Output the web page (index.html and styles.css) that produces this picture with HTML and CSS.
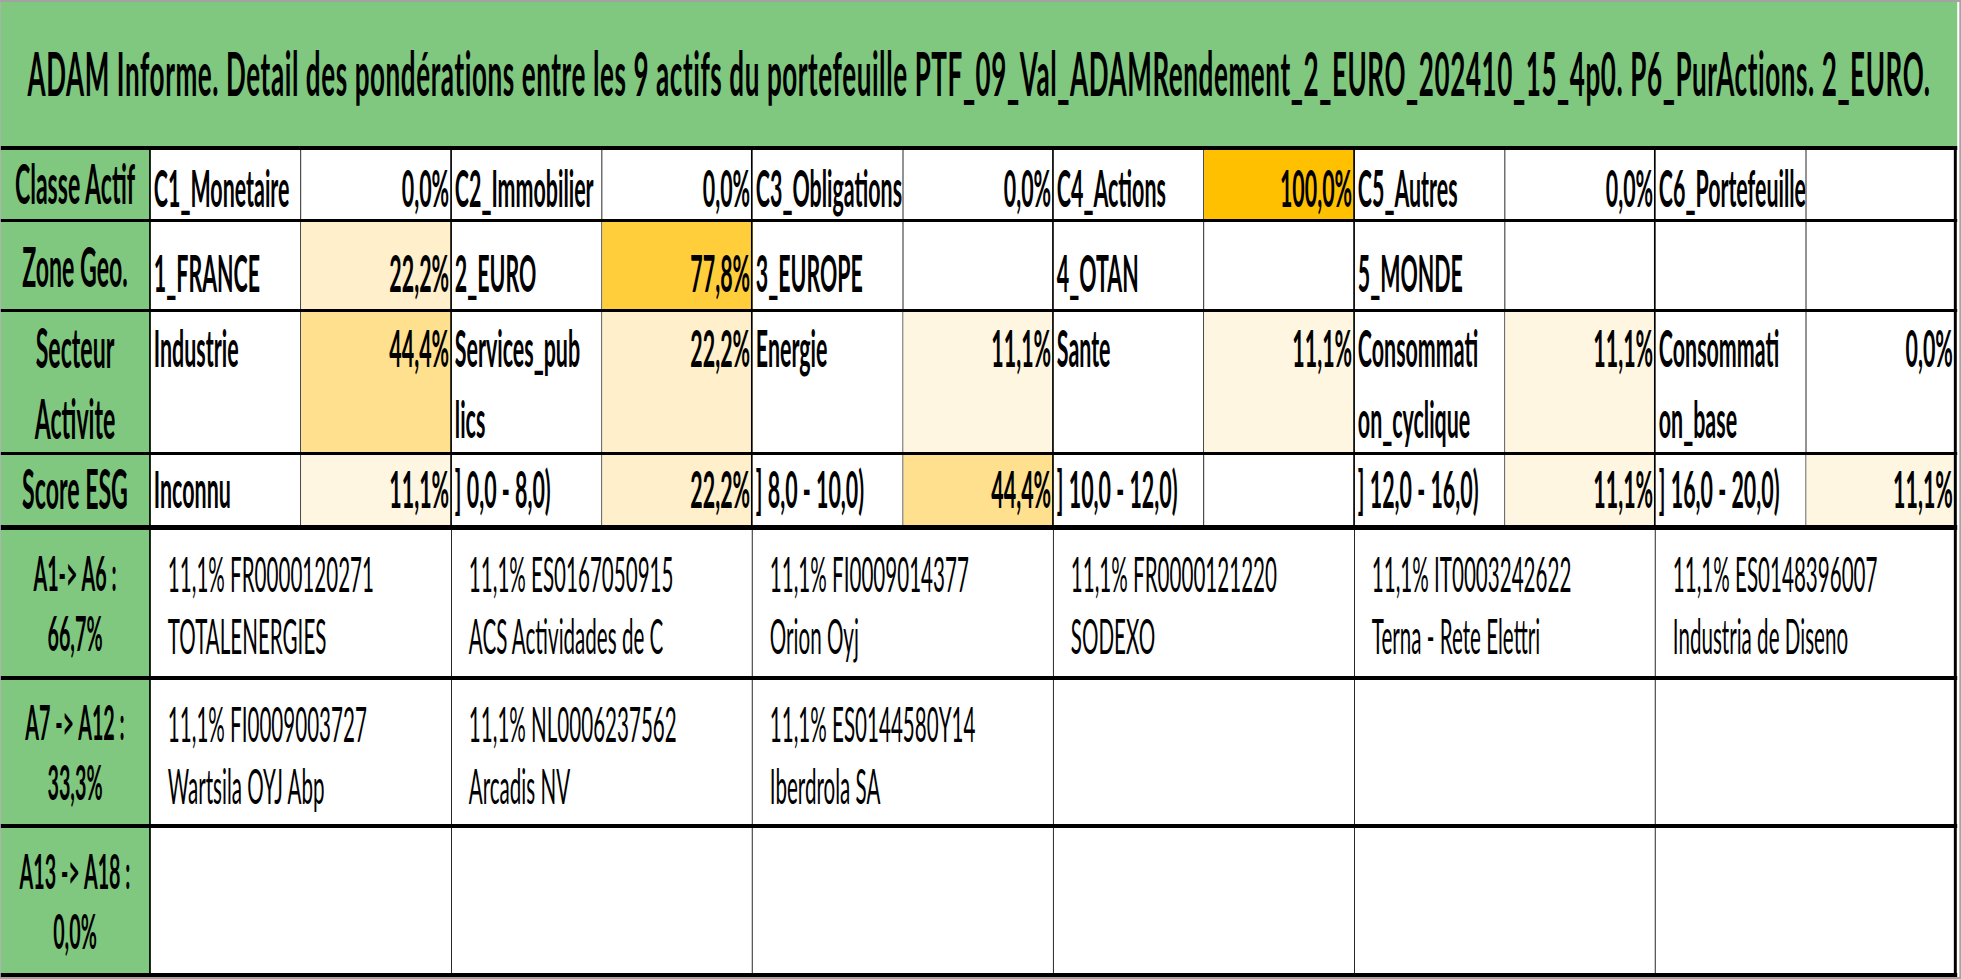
FILE: index.html
```html
<!DOCTYPE html>
<html lang="fr">
<head>
<meta charset="utf-8">
<title>ADAM Informe</title>
<link rel="stylesheet" href="styles.css">
</head>
<body>
<div class="frame">
<div class="sheet">
  <div class="title">ADAM Informe. Detail des pondérations entre les 9 actifs du portefeuille PTF_09_Val_ADAMRendement_2_EURO_202410_15_4p0. P6_PurActions. 2_EURO.</div>

  <div class="row r1">
    <div class="lbl">Classe Actif</div>
    <div class="k">C1_Monetaire</div><div class="v">0,0%</div>
    <div class="k">C2_Immobilier</div><div class="v">0,0%</div>
    <div class="k">C3_Obligations</div><div class="v">0,0%</div>
    <div class="k">C4_Actions</div><div class="v c100">100,0%</div>
    <div class="k">C5_Autres</div><div class="v">0,0%</div>
    <div class="k">C6_Portefeuille</div><div class="v"></div>
  </div>

  <div class="row r2">
    <div class="lbl">Zone Geo.</div>
    <div class="k">1_FRANCE</div><div class="v c22">22,2%</div>
    <div class="k">2_EURO</div><div class="v c78">77,8%</div>
    <div class="k">3_EUROPE</div><div class="v"></div>
    <div class="k">4_OTAN</div><div class="v"></div>
    <div class="k">5_MONDE</div><div class="v"></div>
    <div class="k"></div><div class="v"></div>
  </div>

  <div class="row r3">
    <div class="lbl">Secteur<br>Activite</div>
    <div class="k">Industrie</div><div class="v c44">44,4%</div>
    <div class="k">Services_pub<br>lics</div><div class="v c22">22,2%</div>
    <div class="k">Energie</div><div class="v c11">11,1%</div>
    <div class="k">Sante</div><div class="v c11">11,1%</div>
    <div class="k">Consommati<br>on_cyclique</div><div class="v c11">11,1%</div>
    <div class="k">Consommati<br>on_base</div><div class="v">0,0%</div>
  </div>

  <div class="row r4">
    <div class="lbl">Score ESG</div>
    <div class="k">Inconnu</div><div class="v c11">11,1%</div>
    <div class="k">] 0,0 - 8,0)</div><div class="v c22">22,2%</div>
    <div class="k">] 8,0 - 10,0)</div><div class="v c44">44,4%</div>
    <div class="k">] 10,0 - 12,0)</div><div class="v"></div>
    <div class="k">] 12,0 - 16,0)</div><div class="v c11">11,1%</div>
    <div class="k">] 16,0 - 20,0)</div><div class="v c11">11,1%</div>
  </div>

  <div class="row ra r5">
    <div class="alb"><span>A1-&gt; A6 :</span><span>66,7%</span></div>
    <div class="a">11,1% FR0000120271<br>TOTALENERGIES</div>
    <div class="a">11,1% ES0167050915<br>ACS Actividades de C</div>
    <div class="a">11,1% FI0009014377<br>Orion Oyj</div>
    <div class="a">11,1% FR0000121220<br>SODEXO</div>
    <div class="a">11,1% IT0003242622<br>Terna - Rete Elettri</div>
    <div class="a">11,1% ES0148396007<br>Industria de Diseno</div>
  </div>

  <div class="row ra r6">
    <div class="alb"><span>A7 -&gt; A12 :</span><span>33,3%</span></div>
    <div class="a">11,1% FI0009003727<br>Wartsila OYJ Abp</div>
    <div class="a">11,1% NL0006237562<br>Arcadis NV</div>
    <div class="a">11,1% ES0144580Y14<br>Iberdrola SA</div>
    <div class="a"></div>
    <div class="a"></div>
    <div class="a"></div>
  </div>

  <div class="row ra r7">
    <div class="alb"><span>A13 -&gt; A18 :</span><span>0,0%</span></div>
    <div class="a"></div>
    <div class="a"></div>
    <div class="a"></div>
    <div class="a"></div>
    <div class="a"></div>
    <div class="a"></div>
  </div>
</div>
</div>
</body>
</html>
```

FILE: styles.css
```css
* { box-sizing: border-box; }

html, body {
  margin: 0;
  padding: 0;
  background: #ffffff;
  overflow: hidden;
}

.frame {
  width: 1961px;
  height: 979px;
  overflow: clip;
}

/* The sheet is laid out wide and squeezed horizontally, like the source capture */
.sheet {
  --s: 0.42;
  --green: #80c880;
  width: calc(1961px / var(--s));
  transform: scaleX(var(--s));
  transform-origin: 0 0;
  border-top: 2px solid #a3a3a3;
  border-left: calc(1px / var(--s)) solid #a3a3a3;
  border-right: calc(2px / var(--s)) solid #a3a3a3;
  border-bottom: 2px solid #a3a3a3;
  padding-right: calc(2px / var(--s));
  background: #ffffff;
  font-family: Lato, "Open Sans", "Liberation Sans", sans-serif;
  color: #000;
}

.title {
  height: 148px;
  background: var(--green);
  border-bottom: 4px solid #000;
  line-height: 140px;
  text-align: center;
  font-weight: 700;
  font-size: 62px;
  letter-spacing: 1.4px;
  white-space: nowrap;
  overflow: hidden;
}

.row {
  display: grid;
  grid-template-columns: calc(150px / var(--s)) repeat(12, calc(150.5px / var(--s)));
  grid-template-rows: minmax(0, 1fr);
  border-bottom: 3px solid #000;
  overflow: hidden;
}

.r1 { height: 72px; }
.r2 { height: 90px; }
.r3 { height: 143px; }
.r4 { height: 75px; border-bottom-width: 5px; }
.r5 { height: 150px; border-bottom-width: 4px; }
.r6 { height: 148px; border-bottom-width: 4px; }
.r7 { height: 149px; border-bottom-width: 4px; }

.row > div { overflow: hidden; }

.lbl, .alb {
  background: var(--green);
  border-right: calc(2px / var(--s)) solid #000;
  font-weight: 700;
  text-align: center;
  white-space: nowrap;
}

.lbl {
  font-size: 55px;
  line-height: 1.2;
}

.k, .v {
  font-weight: 700;
  font-size: 51px;
  line-height: 1.2;
  white-space: nowrap;
}

.k {
  border-right: calc(1px / var(--s)) solid #000;
  padding-left: calc(3px / var(--s));
}

.v {
  border-right: calc(2px / var(--s)) solid #000;
  padding-right: calc(1px / var(--s));
  text-align: right;
}

.v:last-child { border-right-width: calc(3px / var(--s)); }

/* vertical placement per row (bottom-aligned cells like the sheet) */
.r1 .k, .r1 .v { padding-top: 7px; }
.r1 .lbl { padding-top: 0; }
.r2 .k, .r2 .v { padding-top: 20px; }
.r2 .lbl { padding-top: 11px; }
.r4 .k, .r4 .v { padding-top: 3px; }
.r4 .lbl { padding-top: 0; }

.r3 .k, .r3 .v, .r3 .lbl {
  line-height: 71px;
}

/* heat colours */
.c100 { background: #ffc000; }
.c78 { background: #ffce3a; }
.c44 { background: #ffe08f; }
.c22 { background: #ffefca; }
.c11 { background: #fff6e2; }

/* asset rows */
.alb {
  display: flex;
  flex-direction: column;
  justify-content: center;
  align-items: center;
  font-size: 47px;
  line-height: 60px;
}

.a {
  grid-column: span 2;
  border-right: calc(1px / var(--s)) solid #000;
  padding-top: 12px;
  padding-left: calc(17px / var(--s));
  font-size: 49px;
  line-height: 62px;
  white-space: nowrap;
}

.a:last-child { border-right-width: calc(3px / var(--s)); }
```
